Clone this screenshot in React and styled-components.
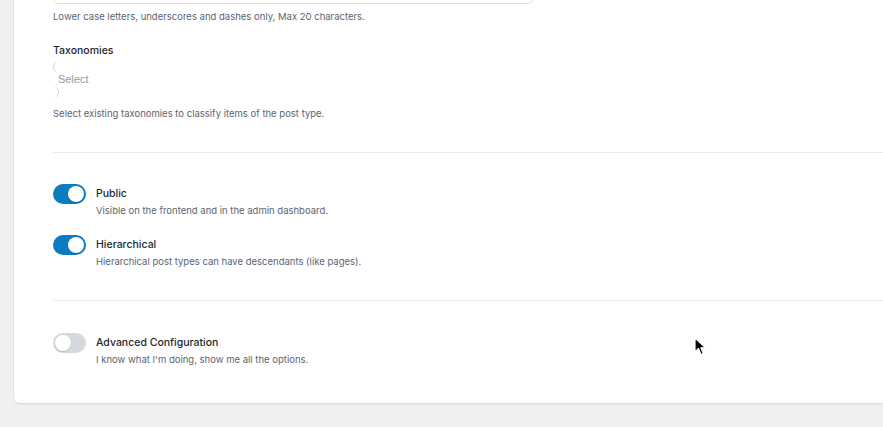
import React from 'react';
import styled, { createGlobalStyle } from 'styled-components';

const GlobalStyle = createGlobalStyle`
  html, body {
    margin: 0;
    padding: 0;
    background: #f0f0f1;
    font-family: Inter, "Noto Sans", "Liberation Sans", sans-serif;
    overflow: hidden;
  }
`;

const Page = styled.div`
  width: 883px;
  height: 427px;
  overflow: hidden;
  position: relative;
  padding-left: 14px;
  box-sizing: border-box;
`;

const Card = styled.div`
  margin-top: -58px;
  background: #fff;
  border-radius: 0 0 0 5px;
  box-shadow: 0 1px 2px rgba(0, 0, 0, 0.08), 0 0 0 1px rgba(0, 0, 0, 0.03);
  padding: 26px 0 35px 39px;
`;

const Section = styled.div`
  display: flex;
  flex-direction: column;
  padding-right: 350px;
`;

const Input = styled.div`
  height: 34px;
  border: 1px solid #e0e0e3;
  border-radius: 5px;
  width: 478px;
`;

const Help = styled.p`
  margin: ${({ $top }) => $top || 0}px 0 0;
  font-size: 9.5px;
  line-height: 16px;
  color: #5b6472;
`;

const Label = styled.div`
  margin-top: ${({ $top }) => $top || 0}px;
  font-size: 10.5px;
  line-height: 16px;
  font-weight: 450;
  color: #23282d;
`;

const SelectBox = styled.div`
  margin-top: 2px;
  display: flex;
  flex-direction: column;
  width: 60px;
`;

const Cap = styled.span`
  display: block;
  width: 5px;
  height: 12px;
  border: 1px solid #cfd0d4;
  border-width: ${({ $bottom }) => ($bottom ? '0 1px 0 0' : '0 0 0 1px')};
  border-radius: ${({ $bottom }) => ($bottom ? '0 6px 6px 0' : '6px 0 0 6px')};
`;

const Placeholder = styled.span`
  padding-left: 5px;
  font-size: 11px;
  line-height: 13px;
  color: #9a9a9a;
  font-family: "Helvetica", "Liberation Sans", Arial, sans-serif;
`;

const Divider = styled.hr`
  border: 0;
  border-top: 1px solid #ececec;
  margin: ${({ $top }) => $top}px 0 0;
`;

const ToggleRow = styled.div`
  display: flex;
  align-items: flex-start;
  gap: 10px;
  margin-top: ${({ $top }) => $top}px;
`;

const Switch = styled.div`
  flex: none;
  width: 33px;
  height: 20px;
  border-radius: 10px;
  box-sizing: border-box;
  background: ${({ $on }) => ($on ? '#0a7cbf' : '#d5d8dd')};
  position: relative;

  &::after {
    content: '';
    position: absolute;
    top: 2px;
    left: ${({ $on }) => ($on ? '15px' : '2px')};
    width: 16px;
    height: 16px;
    border-radius: 50%;
    background: #fff;
    box-shadow: 0 1px 1px rgba(0, 0, 0, 0.15);
  }
`;

const ToggleText = styled.div`
  display: flex;
  flex-direction: column;
  padding-top: 2px;
`;

const ToggleLabel = styled.span`
  font-size: 10.5px;
  line-height: 16px;
  font-weight: 450;
  color: #23282d;
`;

const ToggleDesc = styled.span`
  margin-top: 1px;
  font-size: 9.5px;
  line-height: 16px;
  color: #5b6472;
`;

const Cursor = styled.svg`
  position: absolute;
  left: 694px;
  top: 337px;
`;

const Toggle = ({ on, top, label, desc }) => (
  <ToggleRow $top={top}>
    <Switch $on={on} />
    <ToggleText>
      <ToggleLabel>{label}</ToggleLabel>
      <ToggleDesc>{desc}</ToggleDesc>
    </ToggleText>
  </ToggleRow>
);

export default function App() {
  return (
    <Page>
      <GlobalStyle />
      <Card>
        <Section>
          <Input />
          <Help $top={5}>Lower case letters, underscores and dashes only, Max 20 characters.</Help>
          <Label $top={18}>Taxonomies</Label>
          <SelectBox>
            <Cap />
            <Placeholder>Select</Placeholder>
            <Cap $bottom />
          </SelectBox>
          <Help $top={8}>Select existing taxonomies to classify items of the post type.</Help>
        </Section>
        <Divider $top={30} />
        <Toggle on top={31} label="Public" desc="Visible on the frontend and in the admin dashboard." />
        <Toggle on top={16} label="Hierarchical" desc="Hierarchical post types can have descendants (like pages)." />
        <Divider $top={30} />
        <Toggle top={32} label="Advanced Configuration" desc="I know what I'm doing, show me all the options." />
      </Card>
      <Cursor width="13" height="19" viewBox="0 0 13 19">
        <path d="M1 1 L1 15 L4.5 11.5 L7 17.5 L9.3 16.5 L6.9 10.8 L11.5 10.8 Z" fill="#000" stroke="#fff" strokeWidth="1.2" strokeLinejoin="round" />
      </Cursor>
    </Page>
  );
}
